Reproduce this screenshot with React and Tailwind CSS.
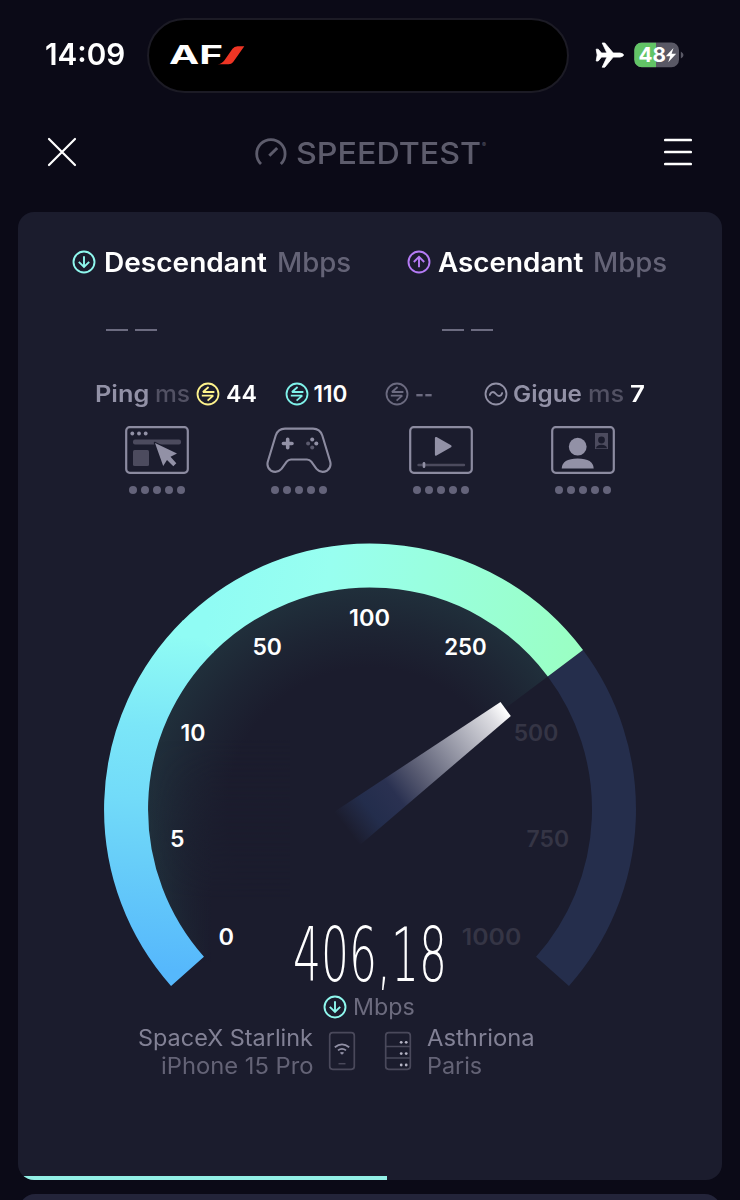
import { useLayoutEffect, useRef, useState } from "react";

// Stretches its text horizontally so that it fills the given width.
function Fit({ w, box = "", className = "", children }) {
  const ref = useRef(null);
  const [scale, setScale] = useState(1);
  useLayoutEffect(() => {
    setScale(w / ref.current.offsetWidth);
  }, [w, children]);
  return (
    <span className={`inline-block shrink-0 whitespace-nowrap ${box}`} style={{ width: w }}>
      <span ref={ref} className={`inline-block origin-left ${className}`} style={{ transform: `scaleX(${scale})` }}>
        {children}
      </span>
    </span>
  );
}

function ArrowCircle({ up = false, className = "" }) {
  return (
    <svg viewBox="0 0 24 24" fill="none" stroke="currentColor" className={`size-6 shrink-0 ${className}`}>
      <circle cx="12" cy="12" r="10.5" strokeWidth="1.9" />
      <path
        d={up ? "M12 17.2V7.2M6.8 12L12 6.9L17.2 12" : "M12 6.3V16.6M6.8 11.9L12 16.9L17.2 11.9"}
        strokeWidth="1.9"
      />
    </svg>
  );
}

function PingIcon({ className = "" }) {
  return (
    <svg viewBox="0 0 24 24" fill="none" stroke="currentColor" className={`size-6 shrink-0 ${className}`}>
      <circle cx="12" cy="12" r="10.5" strokeWidth="1.8" />
      <path d="M12.6 5L7 10H18.4M5.8 13.6H17.2L11.6 18.6" strokeWidth="1.8" strokeLinejoin="bevel" />
    </svg>
  );
}

function JitterIcon({ className = "" }) {
  return (
    <svg viewBox="0 0 24 24" fill="none" stroke="currentColor" className={`size-6 shrink-0 ${className}`}>
      <circle cx="12" cy="12" r="10.5" strokeWidth="1.8" />
      <path d="M5.8 13C7 9 10 9.4 12 12S17 15 18.2 11" strokeWidth="1.8" strokeLinecap="round" />
    </svg>
  );
}

function Dots({ className = "" }) {
  return (
    <div className={`flex gap-1 ${className}`}>
      {[0, 1, 2, 3, 4].map((i) => (
        <span key={i} className="size-2 rounded-full bg-[#64637a]" />
      ))}
    </div>
  );
}

function StatusBar() {
  return (
    <div className="flex h-[110px] shrink-0 items-center">
      <Fit w={80} box="ml-[45px]" className="text-[30px] leading-none font-semibold text-white">14:09</Fit>
      <div className="ml-[22px] flex h-[75px] w-[422px] items-center rounded-full border-[2.5px] border-[#1c1b25] bg-black pl-[20px]">
        <svg width="80" height="34" viewBox="0 -5 80 34">
          <text x="0" y="21" fontFamily="Inter" fontWeight="700" fontSize="25.5" fill="#fff" textLength="54" lengthAdjust="spacingAndGlyphs">AF</text>
          <path d="M48.5 21.3Q53 20.8 55.5 17.2L63.5 5.8Q65.3 3.3 68.5 3.3H75.3L64 19.3Q62.4 21.3 59.5 21.3Z" fill="#ee3524" />
        </svg>
      </div>
      <svg width="30" height="28" viewBox="0 0 30 28" className="ml-[25px]">
        <path d="M2.2 8.2H4.2L7.5 12H13L8.2 2H10.8L19.2 12H26Q29.5 12.6 29.5 14Q29.5 15.4 26 16.1H19.2L10.8 26.2H8.2L13 16.1H7.5L4.2 20H2.2L3.2 14Z" fill="#fff" stroke="#fff" strokeWidth=".8" strokeLinejoin="round" />
      </svg>
      <svg width="52" height="26" viewBox="0 0 52 26" className="ml-[10px]">
        <defs>
          <clipPath id="level"><rect x="0" y="0.5" width="22" height="25" /></clipPath>
        </defs>
        <rect x="0.3" y="0.5" width="44.7" height="24.8" rx="7.5" fill="#595865" />
        <rect x="0.3" y="0.5" width="44.7" height="24.8" rx="7.5" fill="#62c466" clipPath="url(#level)" />
        <path d="M46.8 9.5Q49.5 11 49.5 13T46.8 16.5Z" fill="#595865" />
        <text x="4.5" y="20.3" fontFamily="Inter" fontWeight="700" fontSize="20.5" fill="#fff" textLength="27.5" lengthAdjust="spacingAndGlyphs">48</text>
        <path d="M39.5 6L31.8 14.2H36.2L34.2 20.3L42.2 11.7H37.6Z" fill="#fff" />
      </svg>
    </div>
  );
}

function Header() {
  return (
    <div className="flex h-[84px] shrink-0 items-center">
      <svg width="30" height="30" viewBox="0 0 30 30" className="ml-[47px]">
        <path d="M2 2L28 28M28 2L2 28" stroke="#fff" strokeWidth="2.2" strokeLinecap="round" />
      </svg>
      <svg width="32" height="28" viewBox="0 0 32 28" fill="none" stroke="#5d5c6c" className="ml-[178px]">
        <path d="M6 26A14.2 14.2 0 1 1 25.8 26" strokeWidth="2.8" />
        <path d="M14.3 17.8L22.2 10" strokeWidth="3" />
      </svg>
      <Fit w={185} box="mt-[3px] ml-[9px] leading-none" className="text-[30.5px] leading-none font-medium text-[#5d5c6c]">SPEEDTEST</Fit>
      <span className="mb-[15px] ml-[1px] text-[6px] leading-none text-[#5d5c6c]">®</span>
      <svg width="28" height="28" viewBox="0 0 28 28" className="mr-[48px] ml-auto">
        <path d="M1.3 2H26.7M1.3 14H26.7M1.3 26H26.7" stroke="#fff" strokeWidth="2.7" strokeLinecap="round" />
      </svg>
    </div>
  );
}

function BrowserIcon() {
  return (
    <svg width="64" height="48" viewBox="0 0 64 48">
      <rect x="1.2" y="1.2" width="61.6" height="45.6" rx="3.5" fill="none" stroke="#8c8ba0" strokeWidth="2.2" />
      <g fill="#9291a6">
        <circle cx="7.3" cy="7.5" r="1.9" /><circle cx="14" cy="7.5" r="1.9" /><circle cx="20.7" cy="7.5" r="1.9" />
      </g>
      <rect x="8" y="13.5" width="48" height="5" rx="2" fill="#4c4b5e" />
      <rect x="8" y="24" width="16" height="16" rx="1.5" fill="#4c4b5e" />
      <path d="M30 17L52 27.5L45.5 30.8L51.3 37.2L48.3 40.2L42 34L38.2 40Z" fill="#9291a6" stroke="#1b1c2d" strokeWidth="2.4" paintOrder="stroke" strokeLinejoin="round" />
    </svg>
  );
}

function GamepadIcon() {
  return (
    <svg width="66" height="48" viewBox="0 0 66 48">
      <path d="M19 2.6H47Q54 2.6 56.3 9.5L64.3 36Q65.5 41.5 61 44.7Q54.8 47.7 50.3 42.6L45.3 35.7Q43.7 33.5 41 33.5H25Q22.3 33.5 20.7 35.7L15.7 42.6Q11.2 47.7 5 44.7Q.5 41.5 1.7 36L9.7 9.5Q12 2.6 19 2.6Z" fill="none" stroke="#8c8ba0" strokeWidth="2.1" />
      <path d="M21.7 13.2V21.8M17.4 17.5H26" stroke="#9291a6" strokeWidth="3.6" strokeLinecap="round" />
      <circle cx="46.2" cy="13.4" r="2" fill="#9291a6" /><circle cx="50.3" cy="17.5" r="2" fill="#9291a6" />
      <circle cx="42.1" cy="17.5" r="2" fill="#5b5a6e" /><circle cx="46.2" cy="21.6" r="2" fill="#5b5a6e" />
    </svg>
  );
}

function VideoIcon() {
  return (
    <svg width="64" height="48" viewBox="0 0 64 48">
      <rect x="1.2" y="1.2" width="61.6" height="45.6" rx="3.5" fill="none" stroke="#8c8ba0" strokeWidth="2.2" />
      <path d="M27 12L41.5 20.3L27 28.6Z" fill="#9291a6" stroke="#9291a6" strokeWidth="2.2" strokeLinejoin="round" />
      <path d="M9.5 39H55" stroke="#4c4b5e" strokeWidth="2.4" strokeLinecap="round" />
      <path d="M15 37.2V40.8" stroke="#9291a6" strokeWidth="2.6" strokeLinecap="round" />
    </svg>
  );
}

function CallIcon() {
  return (
    <svg width="64" height="48" viewBox="0 0 64 48">
      <rect x="1.2" y="1.2" width="61.6" height="45.6" rx="3.5" fill="none" stroke="#8c8ba0" strokeWidth="2.2" />
      <circle cx="26.7" cy="20.7" r="8.9" fill="#9291a6" />
      <path d="M10.7 42.5Q11 32.5 26.7 32.5T42.7 42.5Z" fill="#9291a6" />
      <rect x="44" y="7" width="13" height="16" fill="#4c4b5e" />
      <circle cx="50.5" cy="14" r="3.4" fill="#1b1c2d" />
      <path d="M45 22.3Q45.5 18.8 50.5 18.8T56 22.3Z" fill="#1b1c2d" />
    </svg>
  );
}

const marks = [
  { t: "0", x: 226.2, y: 937, w: 15.5, on: true },
  { t: "5", x: 177.3, y: 838.5, w: 14.5, on: true },
  { t: "10", x: 193, y: 732.5, w: 25, on: true },
  { t: "50", x: 267.2, y: 647, w: 29.5, on: true },
  { t: "100", x: 369.6, y: 618, w: 41, on: true },
  { t: "250", x: 465.5, y: 647, w: 42.5, on: true },
  { t: "500", x: 536, y: 732.5, w: 44.5, on: false },
  { t: "750", x: 547.8, y: 838.5, w: 42.5, on: false },
  { t: "1000", x: 491.5, y: 937, w: 59.5, on: false },
];

function Gauge() {
  return (
    <svg width="704" height="480" viewBox="18 530 704 480" className="mt-[36px] -mb-[15px] shrink-0">
      <defs>
        <linearGradient id="arc" gradientUnits="userSpaceOnUse" x1="187.5" y1="971.4" x2="220" y2="640">
          <stop offset="0" stopColor="#56b8fc" />
          <stop offset=".3" stopColor="#67cdf9" />
          <stop offset=".5" stopColor="#72dbf9" />
          <stop offset=".72" stopColor="#7be6f8" />
          <stop offset="1" stopColor="#90fcf4" />
        </linearGradient>
        <linearGradient id="arcEnd" gradientUnits="userSpaceOnUse" x1="210" y1="600" x2="575" y2="670">
          <stop offset="0" stopColor="#90fcf4" />
          <stop offset=".3" stopColor="#98fff0" />
          <stop offset=".55" stopColor="#99ffe0" />
          <stop offset="1" stopColor="#9affc3" />
        </linearGradient>
        <radialGradient id="glow" gradientUnits="userSpaceOnUse" cx="370" cy="809.5" r="222">
          <stop offset=".64" stopColor="#202f3b" stopOpacity="0" />
          <stop offset=".82" stopColor="#202f3b" stopOpacity=".45" />
          <stop offset="1" stopColor="#202f3b" />
        </radialGradient>
        <linearGradient id="fade" gradientUnits="userSpaceOnUse" x1="150" y1="0" x2="212" y2="0">
          <stop offset="0" stopColor="#1b1c2d" stopOpacity="0" />
          <stop offset="1" stopColor="#1b1c2d" />
        </linearGradient>
        <linearGradient id="ramp" gradientUnits="userSpaceOnUse" x1="0" y1="740" x2="0" y2="900">
          <stop offset="0" stopColor="#000" />
          <stop offset="1" stopColor="#fff" />
        </linearGradient>
        <mask id="lower" maskUnits="userSpaceOnUse" x="140" y="740" width="160" height="225">
          <rect x="140" y="740" width="160" height="225" fill="url(#ramp)" />
        </mask>
        <linearGradient id="needle" gradientUnits="userSpaceOnUse" x1="347" y1="829" x2="505" y2="709">
          <stop offset="0" stopColor="#252f4e" stopOpacity="0" />
          <stop offset=".15" stopColor="#232d4c" />
          <stop offset=".3" stopColor="#2a3151" />
          <stop offset=".45" stopColor="#565970" />
          <stop offset=".92" stopColor="#dedee3" />
          <stop offset="1" stopColor="#fff" />
        </linearGradient>
      </defs>
      <path d="M370 809.5L204 956.8A222 222 0 1 1 547.7 676.5Z" fill="url(#glow)" />
      <path d="M150 740H290V962H200Q150 900 150 810Z" fill="url(#fade)" mask="url(#lower)" />
      <path d="M565.4 663.3A244 244 0 0 1 552.5 971.4" fill="none" stroke="#252e4c" strokeWidth="44" />
      <path d="M197.5 637A244 244 0 0 1 565.4 663.3" fill="none" stroke="url(#arcEnd)" strokeWidth="44" />
      <path d="M187.5 971.4A244 244 0 0 1 198.5 636" fill="none" stroke="url(#arc)" strokeWidth="44" />
      <path d="M500.5 702L510.8 716L360 845L334 812Z" fill="url(#needle)" />
      {marks.map((m) => (
        <text key={m.t} x={m.x - m.w / 2} y={m.y + 8} textLength={m.w} lengthAdjust="spacingAndGlyphs" fontFamily="Inter" fontWeight="600" fontSize="22.3" fill={m.on ? "#fff" : "#353545"}>
          {m.t}
        </text>
      ))}
      <text x="293" y="981" textLength="154" lengthAdjust="spacingAndGlyphs" fontFamily="'DejaVu Sans Light', 'DejaVu Sans', sans-serif" fontWeight="200" fontSize="75.5" fill="#fff">406,18</text>
    </svg>
  );
}

function Connection() {
  return (
    <div className="mt-[5px] flex h-14 shrink-0 items-center text-[22.5px] leading-7 text-[#828195]">
      <div className="flex w-[295px] flex-col items-end">
        <Fit w={175}>SpaceX Starlink</Fit>
        <Fit w={152} className="text-[#646376]">iPhone 15 Pro</Fit>
      </div>
      <svg width="28" height="40" viewBox="0 0 28 40" fill="none" className="mb-[2px] ml-[15px]">
        <rect x="1.7" y="1.7" width="24.6" height="36.6" rx="3" stroke="#4a495b" strokeWidth="1.7" />
        <path d="M6.8 16.2Q14 10.6 21.2 16.2M10 19.4Q14 16.4 18 19.4" stroke="#9291a6" strokeWidth="1.8" />
        <path d="M11.8 21.7Q14 20.2 16.2 21.7L14 23.8Z" fill="#9291a6" />
        <path d="M10.5 32.7H17.5" stroke="#4a495b" strokeWidth="1.5" />
      </svg>
      <svg width="28" height="40" viewBox="0 0 28 40" fill="none" className="mb-[2px] ml-[28px]">
        <path d="M1.7 15.5H26.3M1.7 27H26.3" stroke="#4a495b" strokeWidth="1.7" />
        <rect x="1.7" y="1.7" width="24.6" height="36.6" rx="3" stroke="#4a495b" strokeWidth="1.7" />
        <g fill="#b5b4c4">
          <circle cx="17.2" cy="11.3" r="1.4" /><circle cx="22.2" cy="11.3" r="1.4" />
          <circle cx="17.2" cy="22.6" r="1.4" /><circle cx="22.2" cy="22.6" r="1.4" />
          <circle cx="17.2" cy="34" r="1.4" /><circle cx="22.2" cy="34" r="1.4" />
        </g>
      </svg>
      <div className="ml-[15px] flex flex-col">
        <Fit w={108}>Asthriona</Fit>
        <Fit w={55} className="text-[#646376]">Paris</Fit>
      </div>
    </div>
  );
}

export default function App() {
  return (
    <div className="flex h-[1200px] w-[740px] flex-col overflow-hidden bg-[#0b0a17] font-['Inter',sans-serif]">
      <StatusBar />
      <Header />
      <main className="mx-[18px] mt-[18px] flex h-[968px] shrink-0 flex-col overflow-hidden rounded-2xl bg-[#1b1c2d]">
        <div className="mt-[34px] flex h-8 shrink-0 items-center pl-[53.5px] text-[26.5px] leading-none font-semibold text-white">
          <ArrowCircle className="text-[#8ff8ee]" />
          <Fit w={163} box="ml-[8px]">Descendant</Fit>
          <Fit w={74} box="ml-[10px]" className="font-medium text-[#646376]">Mbps</Fit>
          <ArrowCircle up className="ml-[56px] text-[#b57bf5]" />
          <Fit w={145} box="ml-[7px]">Ascendant</Fit>
          <Fit w={74} box="ml-[10px]" className="font-medium text-[#646376]">Mbps</Fit>
        </div>
        <div className="flex h-[104px] shrink-0 items-center pl-[88px]">
          <span className="h-[2.5px] w-[22px] bg-[#6c6b80]" />
          <span className="ml-[7px] h-[2.5px] w-[22px] bg-[#6c6b80]" />
          <span className="ml-[284.5px] h-[2.5px] w-[22px] bg-[#6c6b80]" />
          <span className="ml-[7px] h-[2.5px] w-[22px] bg-[#6c6b80]" />
        </div>
        <div className="flex h-6 shrink-0 items-center pl-[77px] text-[22.5px] leading-none font-semibold text-white">
          <Fit w={54} className="text-[#9291a6]">Ping</Fit>
          <Fit w={35} box="ml-[6px]" className="font-medium text-[#525163]">ms</Fit>
          <PingIcon className="ml-[6px] text-[#fdf28c]" />
          <Fit w={31} box="ml-[6px]">44</Fit>
          <PingIcon className="ml-[27.5px] text-[#7ff2ea]" />
          <Fit w={34} box="ml-[5px]">110</Fit>
          <PingIcon className="ml-[37.5px] text-[#6c6b80]" />
          <Fit w={18} box="ml-[6px]" className="text-[#6c6b80]">--</Fit>
          <JitterIcon className="ml-[51px] text-[#9291a6]" />
          <Fit w={69} box="ml-[5px]" className="text-[#9291a6]">Gigue</Fit>
          <Fit w={36} box="ml-[6px]" className="font-medium text-[#525163]">ms</Fit>
          <Fit w={15} box="ml-[6px]">7</Fit>
        </div>
        <div className="mt-5 flex h-[68px] shrink-0 pl-[107px]">
          <div className="flex w-16 flex-col items-center justify-between"><BrowserIcon /><Dots /></div>
          <div className="ml-[77px] flex w-[66px] flex-col items-center justify-between"><GamepadIcon /><Dots /></div>
          <div className="ml-[77px] flex w-16 flex-col items-center justify-between"><VideoIcon /><Dots /></div>
          <div className="ml-[78px] flex w-16 flex-col items-center justify-between"><CallIcon /><Dots /></div>
        </div>
        <Gauge />
        <div className="flex h-6 shrink-0 items-center pl-[305px] text-[22.5px] leading-none text-[#6c6b7e]">
          <ArrowCircle className="mr-[6px] text-[#8ff8ee]" />
          <Fit w={62}>Mbps</Fit>
        </div>
        <Connection />
        <div className="mt-auto h-1 w-[369px] shrink-0 bg-[#93f0e6]" />
      </main>
      <div className="mx-[19px] mt-[14px] h-10 shrink-0 rounded-2xl bg-[#23243a]" />
    </div>
  );
}
